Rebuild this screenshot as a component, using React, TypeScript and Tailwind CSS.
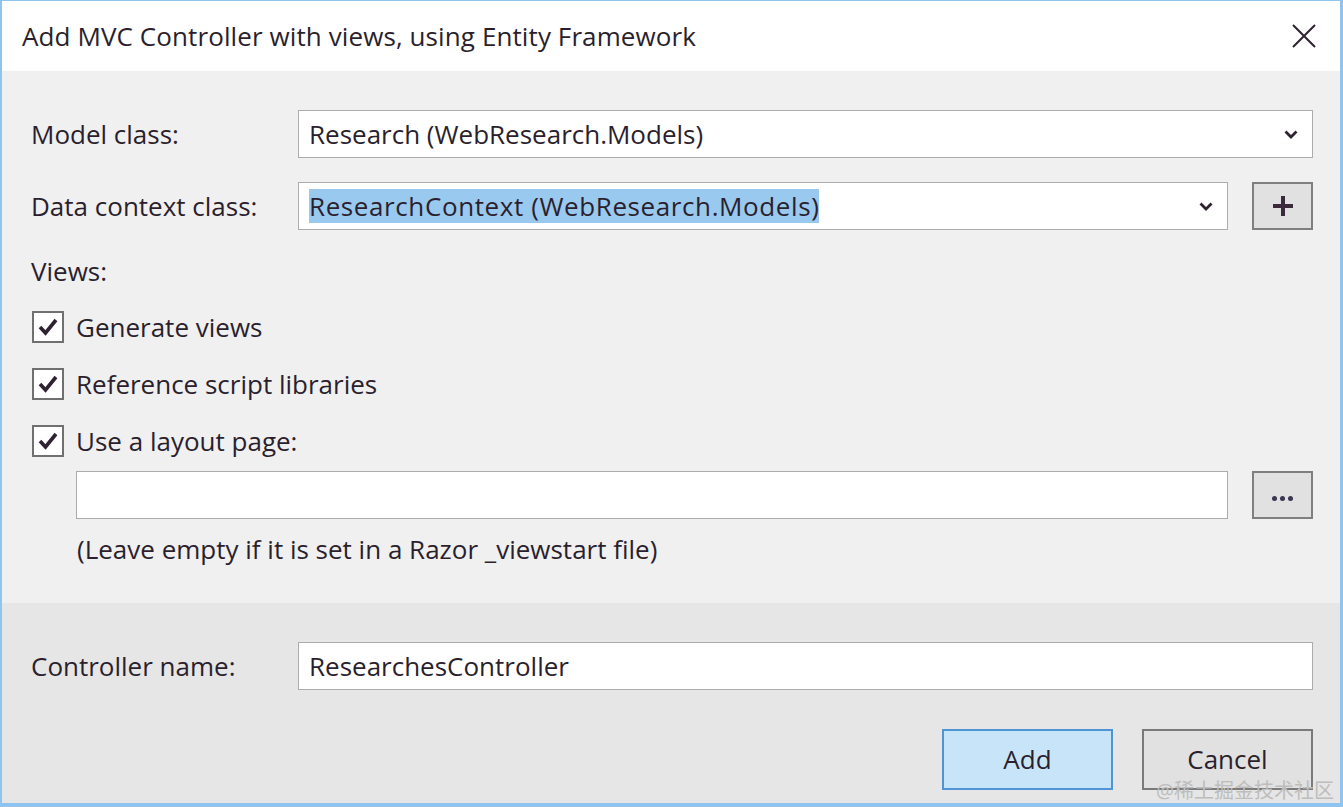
import React from "react";

const font = { fontFamily: '"Open Sans", "Noto Sans", "Noto Sans CJK SC", sans-serif' };

function Chevron() {
	return (
		<svg width="14" height="9" viewBox="0 0 14 9" className="shrink-0">
			<path d="M1.5 1.5 L7 7 L12.5 1.5" fill="none" stroke="#2e2230" strokeWidth="2.8" />
		</svg>
	);
}

function Check() {
	return (
		<div className="w-[32px] h-[32px] bg-white border-2 border-[#707070] flex items-center justify-center shrink-0">
			<svg width="22" height="20" viewBox="0 0 22 20">
				<path d="M3 10 L8.5 16 L19 3" fill="none" stroke="#2e2230" strokeWidth="3.6" strokeLinejoin="miter" />
			</svg>
		</div>
	);
}

function SmallButton({ children }: { children: React.ReactNode }) {
	return (
		<div className="w-[61px] h-[48px] bg-[#e1e1e1] border-2 border-[#7f7f7f] flex items-center justify-center shrink-0">
			{children}
		</div>
	);
}

export default function App() {
	return (
		<div
			style={font}
			className="relative w-[1343px] h-[807px] flex flex-col border-l-2 border-t border-r-[3px] border-b-4 border-[#8fc4f1] text-[#2b1f2d] text-[26px] font-medium overflow-hidden"
		>
			{/* Title bar */}
			<div className="h-[70px] bg-white flex items-center justify-between pl-[20px] pr-[24px] shrink-0">
				<div className="tracking-[0.1px]">Add MVC Controller with views, using Entity Framework</div>
				<svg width="24" height="24" viewBox="0 0 24 24">
					<path d="M1 1 L23 23 M23 1 L1 23" stroke="#2e2230" strokeWidth="2" />
				</svg>
			</div>

			{/* Body */}
			<div className="flex-1 bg-[#f0f0f0] pl-[29px] pr-[27px] pt-[39px] flex flex-col">
				<div className="flex items-center h-[48px]">
					<div className="w-[267px] shrink-0">Model class:</div>
					<div className="flex-1 h-[48px] bg-white border border-[#acacac] flex items-center justify-between pl-[10px] pr-[14px]">
						<span>Research (WebResearch.Models)</span>
						<Chevron />
					</div>
				</div>

				<div className="flex items-center h-[48px] mt-[24px]">
					<div className="w-[267px] shrink-0">Data context class:</div>
					<div className="flex-1 h-[48px] bg-white border border-[#acacac] flex items-center justify-between pl-[10px] pr-[14px]">
						<span className="bg-[#99c9ef] leading-[34px] tracking-[0.6px]">ResearchContext (WebResearch.Models)</span>
						<Chevron />
					</div>
					<div className="w-[24px] shrink-0" />
					<SmallButton>
						<svg width="22" height="22" viewBox="0 0 22 22">
							<path d="M11 1 V21 M1 11 H21" stroke="#3a2a3c" strokeWidth="4" />
						</svg>
					</SmallButton>
				</div>

				<div className="mt-[24px] leading-[34px]">Views:</div>

				<div className="flex flex-col gap-[23px] mt-[22px]">
					<label className="flex items-center gap-[12px] pl-[1px] leading-[34px]">
						<Check />
						<span>Generate views</span>
					</label>
					<label className="flex items-center gap-[12px] pl-[1px] leading-[34px]">
						<Check />
						<span>Reference script libraries</span>
					</label>
					<label className="flex items-center gap-[12px] pl-[1px] leading-[34px]">
						<Check />
						<span>Use a layout page:</span>
					</label>
				</div>

				<div className="flex items-center h-[48px] mt-[13px] pl-[45px]">
					<div className="flex-1 h-[48px] bg-white border border-[#acacac]" />
					<div className="w-[24px] shrink-0" />
					<SmallButton>
						<span className="flex gap-[3px] mt-[6px]">
							<span className="w-[5px] h-[5px] rounded-full bg-[#3a3550]" />
							<span className="w-[5px] h-[5px] rounded-full bg-[#3a3550]" />
							<span className="w-[5px] h-[5px] rounded-full bg-[#3a3550]" />
						</span>
					</SmallButton>
				</div>

				<div className="mt-[12px] pl-[46px] leading-[36px]">(Leave empty if it is set in a Razor _viewstart file)</div>
			</div>

			{/* Footer */}
			<div className="h-[200px] bg-[#e6e6e6] pl-[29px] pr-[27px] pt-[39px] flex flex-col shrink-0">
				<div className="flex items-center h-[48px]">
					<div className="w-[267px] shrink-0">Controller name:</div>
					<div className="flex-1 h-[48px] bg-white border border-[#acacac] flex items-center pl-[10px]">
						ResearchesController
					</div>
				</div>
				<div className="flex justify-end gap-[29px] mt-[39px]">
					<div className="w-[171px] h-[61px] bg-[#c7e4f9] border-2 border-[#4f95d6] flex items-center justify-center">
						Add
					</div>
					<div className="w-[171px] h-[61px] bg-[#e1e1e1] border-2 border-[#7a7a7a] flex items-center justify-center">
						Cancel
					</div>
				</div>
			</div>

			<div className="absolute right-[6px] bottom-[-2px] text-[20px] font-normal text-[#bdbdbd] leading-[28px]">@稀土掘金技术社区</div>
		</div>
	);
}
